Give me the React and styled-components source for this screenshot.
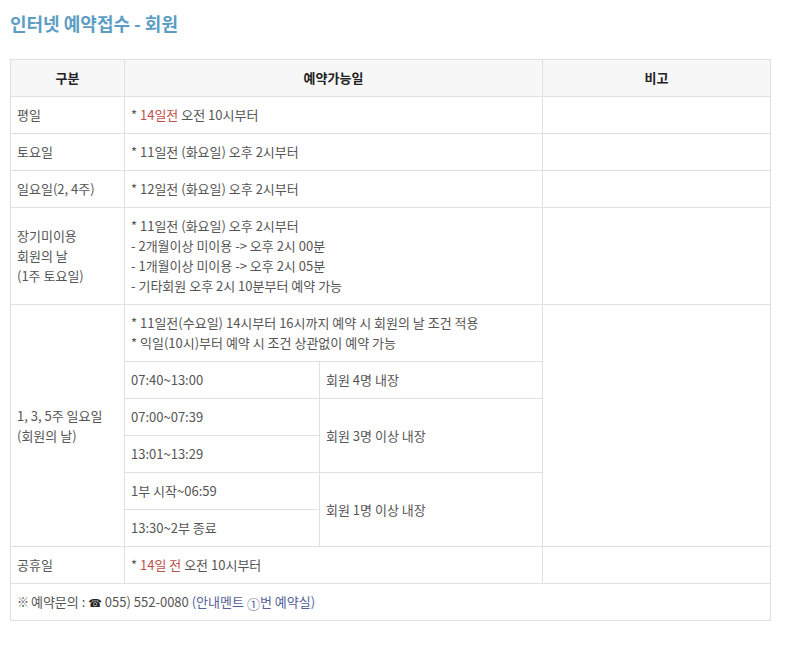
import React from 'react';
import styled, { createGlobalStyle } from 'styled-components';

const GlobalStyle = createGlobalStyle`
    html, body {
        margin: 0;
        padding: 0;
        background: #fff;
    }
    body {
        font-family: "Noto Sans CJK KR", "Noto Sans", sans-serif;
        font-size: 13px;
        line-height: 20px;
        color: #555;
    }
`;

const Page = styled.div`
    width: 760px;
    padding: 11px 17px 27px 10px;
`;

const Title = styled.h2`
    margin: 0 0 23px;
    font-size: 18px;
    line-height: 25px;
    font-weight: 700;
    color: #5b9dc4;
`;

const Table = styled.table`
    width: 760px;
    table-layout: fixed;
    border-collapse: collapse;
    border: 1px solid #e0e0e0;
`;

const HeadCell = styled.th`
    height: 20px;
    padding: 8px 6px;
    border: 1px solid #e0e0e0;
    background: #f7f7f7;
    font-weight: 700;
    color: #222;
    text-align: center;
`;

const Cell = styled.td`
    padding: 8px 6px;
    border: 1px solid #e0e0e0;
    text-align: left;
    vertical-align: middle;
`;

const Red = styled.span`
    color: #c0504d;
`;

const Blue = styled.span`
    color: #55609a;
`;

const Mark = styled.span`
    font-size: 12px;
    line-height: 1;
    letter-spacing: -1px;
`;

const Phone = styled.span`
    font-family: "DejaVu Sans", sans-serif;
    font-size: 11px;
    line-height: 1;
    color: #222;
`;

const Circled = styled.span`
    line-height: 1;
    vertical-align: -2px;
`;

const Line = styled.div``;

const App = () => (
    <Page>
        <GlobalStyle />
        <Title>인터넷 예약접수 - 회원</Title>
        <Table>
            <colgroup>
                <col style={{ width: 114 }} />
                <col style={{ width: 195 }} />
                <col style={{ width: 223 }} />
                <col style={{ width: 228 }} />
            </colgroup>
            <thead>
                <tr>
                    <HeadCell>구분</HeadCell>
                    <HeadCell colSpan={2}>예약가능일</HeadCell>
                    <HeadCell>비고</HeadCell>
                </tr>
            </thead>
            <tbody>
                <tr>
                    <Cell>평일</Cell>
                    <Cell colSpan={2}>* <Red>14일전</Red> 오전 10시부터</Cell>
                    <Cell />
                </tr>
                <tr>
                    <Cell>토요일</Cell>
                    <Cell colSpan={2}>* 11일전 (화요일) 오후 2시부터</Cell>
                    <Cell />
                </tr>
                <tr>
                    <Cell>일요일(2, 4주)</Cell>
                    <Cell colSpan={2}>* 12일전 (화요일) 오후 2시부터</Cell>
                    <Cell />
                </tr>
                <tr>
                    <Cell>
                        <Line>장기미이용</Line>
                        <Line>회원의 날</Line>
                        <Line>(1주 토요일)</Line>
                    </Cell>
                    <Cell colSpan={2}>
                        <Line>* 11일전 (화요일) 오후 2시부터</Line>
                        <Line>- 2개월이상 미이용 -&gt; 오후 2시 00분</Line>
                        <Line>- 1개월이상 미이용 -&gt; 오후 2시 05분</Line>
                        <Line>- 기타회원 오후 2시 10분부터 예약 가능</Line>
                    </Cell>
                    <Cell />
                </tr>
                <tr>
                    <Cell rowSpan={6}>
                        <Line>1, 3, 5주 일요일</Line>
                        <Line>(회원의 날)</Line>
                    </Cell>
                    <Cell colSpan={2}>
                        <Line>* 11일전(수요일) 14시부터 16시까지 예약 시 회원의 날 조건 적용</Line>
                        <Line>* 익일(10시)부터 예약 시 조건 상관없이 예약 가능</Line>
                    </Cell>
                    <Cell rowSpan={6} />
                </tr>
                <tr>
                    <Cell>07:40~13:00</Cell>
                    <Cell>회원 4명 내장</Cell>
                </tr>
                <tr>
                    <Cell>07:00~07:39</Cell>
                    <Cell rowSpan={2}>회원 3명 이상 내장</Cell>
                </tr>
                <tr>
                    <Cell>13:01~13:29</Cell>
                </tr>
                <tr>
                    <Cell>1부 시작~06:59</Cell>
                    <Cell rowSpan={2}>회원 1명 이상 내장</Cell>
                </tr>
                <tr>
                    <Cell>13:30~2부 종료</Cell>
                </tr>
                <tr>
                    <Cell>공휴일</Cell>
                    <Cell colSpan={2}>* <Red>14일 전</Red> 오전 10시부터</Cell>
                    <Cell />
                </tr>
                <tr>
                    <Cell colSpan={4}>
                        <Mark>※</Mark> 예약문의 : <Phone>☎</Phone> 055) 552-0080 <Blue>(안내멘트 <Circled>①</Circled>번 예약실)</Blue>
                    </Cell>
                </tr>
            </tbody>
        </Table>
    </Page>
);

export default App;
